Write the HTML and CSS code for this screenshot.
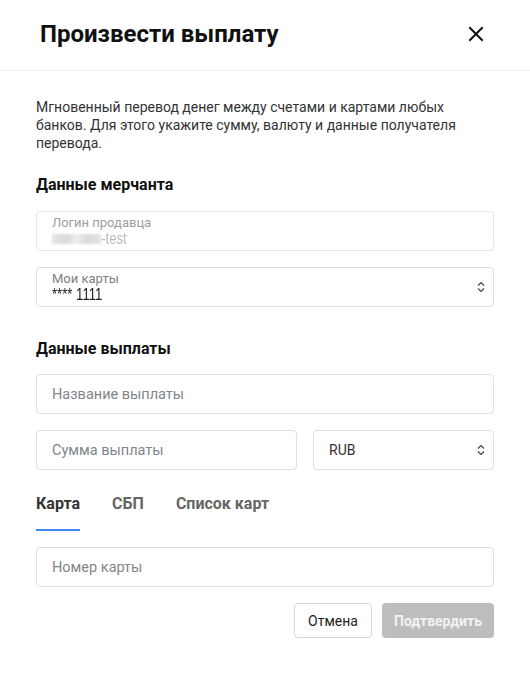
FILE: index.html
```html
<!DOCTYPE html>
<html lang="ru">
<head>
<meta charset="utf-8">
<link rel="stylesheet" href="styles.css">
</head>
<body>
<div class="modal">
  <header class="modal-header">
    <h1 class="title">Произвести выплату</h1>
    <button class="close" aria-label="Закрыть">
      <svg width="16" height="16" viewBox="0 0 16 16"><path d="M2 2L14 14M14 2L2 14" stroke="#111" stroke-width="2" stroke-linecap="square"/></svg>
    </button>
  </header>
  <div class="modal-body">
    <p class="intro">Мгновенный перевод денег между счетами и картами любых банков. Для этого укажите сумму, валюту и данные получателя перевода.</p>

    <h2 class="section">Данные мерчанта</h2>
    <div class="field field-float field-disabled">
      <span class="float-label">Логин продавца</span>
      <span class="float-value"><span class="blur"></span>-test</span>
    </div>
    <div class="field field-float field-select">
      <span class="float-label">Мои карты</span>
      <span class="float-value dark">**** 1111</span>
      <svg class="chev" width="8" height="12" viewBox="0 0 8 12"><path d="M1 4.5L4 1.5L7 4.5M1 7.5L4 10.5L7 7.5" fill="none" stroke="#444" stroke-width="1.2"/></svg>
    </div>

    <h2 class="section section-2">Данные выплаты</h2>
    <div class="field"><span class="placeholder">Название выплаты</span></div>
    <div class="row">
      <div class="field grow"><span class="placeholder">Сумма выплаты</span></div>
      <div class="field field-select currency">
        <span class="value">RUB</span>
        <svg class="chev" width="8" height="12" viewBox="0 0 8 12"><path d="M1 4.5L4 1.5L7 4.5M1 7.5L4 10.5L7 7.5" fill="none" stroke="#444" stroke-width="1.2"/></svg>
      </div>
    </div>

    <nav class="tabs">
      <span class="tab active">Карта</span>
      <span class="tab">СБП</span>
      <span class="tab">Список карт</span>
    </nav>
    <div class="field"><span class="placeholder">Номер карты</span></div>

    <div class="actions">
      <button class="btn btn-cancel">Отмена</button>
      <button class="btn btn-confirm">Подтвердить</button>
    </div>
  </div>
</div>
</body>
</html>
```
FILE: styles.css
```css
* { box-sizing: border-box; }
html, body { margin: 0; padding: 0; background: #fff; }
body { font-family: Roboto, "Liberation Sans", sans-serif; color: #212121; }

.modal { width: 530px; }

.modal-header {
  height: 71px;
  border-bottom: 1px solid #eceef0;
  display: flex;
  align-items: center;
  justify-content: space-between;
  padding: 0 46px 3px 40px;
}
.title { margin: 0; font-size: 24px; font-weight: 700; color: #111; }
.close { border: 0; background: none; padding: 0; width: 16px; height: 16px; display: flex; cursor: pointer; }

.modal-body { padding: 27px 36px 0 36px; display: flex; flex-direction: column; }

.intro { margin: 0; font-size: 14px; line-height: 18px; color: #333; }

.section { margin: 23px 0 16px; font-size: 16px; line-height: 20px; font-weight: 700; color: #111; }
.section-2 { margin-top: 16px; margin-bottom: 15px; }

.field {
  height: 40px;
  border: 1px solid #dcdfe3;
  border-radius: 4px;
  padding: 0 15px;
  display: flex;
  align-items: center;
  position: relative;
  margin-bottom: 16px;
  font-size: 14.5px;
}
.field-float { flex-direction: column; align-items: flex-start; justify-content: flex-start; padding-top: 3px; }
.field-disabled { border-color: #e6e8eb; }
.float-label { font-size: 13px; line-height: 15px; color: #7d8185; }
.field-disabled .float-label { color: #9aa0a6; }
.float-value {
  font-family: "Liberation Sans", Arial, sans-serif;
  font-size: 16px; line-height: 17px; color: #b8bbbe; display: flex; align-items: center;
  transform: scaleX(0.82);
  transform-origin: left center;
}
.float-value.dark { color: #222; }
.blur {
  display: inline-block;
  width: 60px; height: 10px;
  background: linear-gradient(90deg, #e6e6e6, #d9d9d9 30%, #eeeeee 50%, #dadada 70%, #e4e4e4);
  filter: blur(1px);
}
.chev { position: absolute; right: 8px; top: 50%; margin-top: -6px; }
.placeholder { color: #80868b; }
.value { color: #333; font-size: 14px; }

.row { display: flex; gap: 16px; }
.grow { flex: 1; }
.currency { width: 181px; }

.tabs { display: flex; gap: 32px; margin-bottom: 16px; }
.tab {
  font-size: 16px; font-weight: 700; color: #666;
  padding: 8px 0 16px;
  border-bottom: 2px solid transparent;
  line-height: 19px;
}
.tab.active { color: #333; border-bottom-color: #4285f4; }

.actions { display: flex; justify-content: flex-end; gap: 10px; }
.btn {
  height: 35px; border-radius: 4px; font-family: Roboto, "Liberation Sans", sans-serif; font-size: 14px;
}
.btn-cancel { width: 78px; background: #fff; border: 1px solid #d6d9dc; color: #222; }
.btn-confirm { width: 112px; background: #bdbdbd; border: 0; color: #f2f2f2; font-weight: 700; }
```
